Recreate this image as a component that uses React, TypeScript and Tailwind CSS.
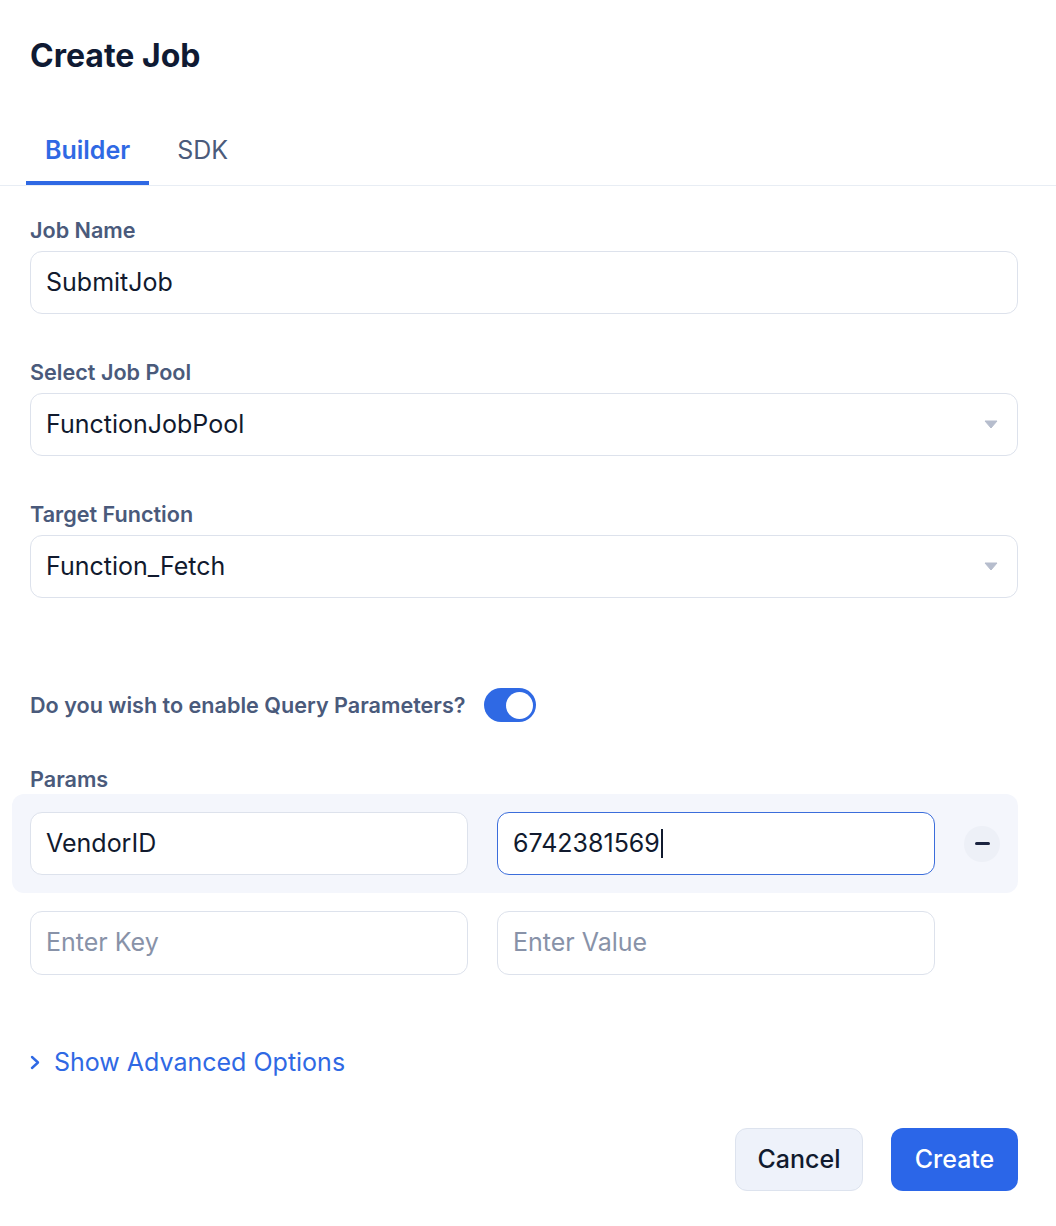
function Label({ children }: { children: React.ReactNode }) {
  return (
    <div className="text-[21.6px] leading-[28px] font-semibold text-[#4a5a7b]">
      {children}
    </div>
  )
}

function Field({
  value,
  placeholder,
  select,
  focused,
  className = '',
}: {
  value?: string
  placeholder?: string
  select?: boolean
  focused?: boolean
  className?: string
}) {
  return (
    <div
      className={`flex h-[63px] items-center rounded-[12px] border bg-white pl-[15px] pr-[19px] text-[25px] ${
        focused ? 'border-[#3b6ddb]' : 'border-[#dde2ec]'
      } ${className}`}
    >
      <span className={value ? 'text-[#111a2e]' : 'text-[#8892a8]'}>
        {value || placeholder}
      </span>
      {focused && <span className="ml-[1px] h-[29px] w-[2px] bg-[#111a2e]" />}
      {select && (
        <svg className="ml-auto" width="14" height="9" viewBox="0 0 14 9">
          <path d="M1 1h12L7 8z" fill="#b6bdcd" stroke="#b6bdcd" strokeLinejoin="round" />
        </svg>
      )}
    </div>
  )
}

export default function App() {
  return (
    <div className="min-h-[1226px] bg-white font-['Inter',sans-serif]">
      {/* Header */}
      <div className="pl-[30px] pt-[36px]">
        <h1 className="text-[32px] leading-[40px] font-bold text-[#0f1a33]">Create Job</h1>
      </div>

      {/* Tabs */}
      <div className="mt-[40px] flex border-b border-[#e8edf4] pl-[26px]">
        <button className="flex h-[69px] items-center border-b-4 border-[#2f69e4] px-[19px] pt-[4px] text-[25px] font-semibold text-[#2f69e4]">
          Builder
        </button>
        <button className="ml-[9px] flex h-[69px] items-center px-[19px] text-[25px] text-[#4b5b7b]">
          SDK
        </button>
      </div>

      <div className="pl-[30px] pr-[38px]">
        <div className="mt-[30px] flex flex-col gap-[7px]">
          <Label>Job Name</Label>
          <Field value="SubmitJob" />
        </div>

        <div className="mt-[44px] flex flex-col gap-[7px]">
          <Label>Select Job Pool</Label>
          <Field value="FunctionJobPool" select />
        </div>

        <div className="mt-[44px] flex flex-col gap-[7px]">
          <Label>Target Function</Label>
          <Field value="Function_Fetch" select />
        </div>

        {/* Toggle */}
        <div className="mt-[90px] flex items-center gap-[18px]">
          <Label>Do you wish to enable Query Parameters?</Label>
          <div className="flex h-[34px] w-[52px] items-center justify-end rounded-full bg-[#2f69e4] pr-[3px]">
            <div className="h-[27px] w-[27px] rounded-full bg-white" />
          </div>
        </div>

        {/* Params */}
        <div className="mt-[43px]">
          <Label>Params</Label>
        </div>
        <div className="-ml-[18px] mt-[1px] flex items-center gap-[29px] rounded-[12px] bg-[#f4f6fc] py-[18px] pl-[18px] pr-[18px]">
          <Field value="VendorID" className="flex-1" />
          <Field value="6742381569" focused className="flex-1" />
          <button className="flex h-[36px] w-[36px] items-center justify-center rounded-full bg-[#edf0f7]">
            <span className="h-[3px] w-[15px] rounded-full bg-[#1b2440]" />
          </button>
        </div>
        <div className="-ml-[18px] flex items-center gap-[29px] pb-[18px] pl-[18px] pr-[18px] pt-[18px]">
          <Field placeholder="Enter Key" className="h-[64px] flex-1" />
          <Field placeholder="Enter Value" className="h-[64px] flex-1" />
          <div className="w-[36px]" />
        </div>

        {/* Advanced */}
        <button className="mt-[53px] flex items-center gap-[13px] text-[25px] leading-[32px] text-[#2f69e4]">
          <svg width="11" height="15" viewBox="0 0 11 15" fill="none">
            <path
              d="M2 2l6 5.5L2 13"
              stroke="#2f69e4"
              strokeWidth="2.4"
              strokeLinecap="round"
              strokeLinejoin="round"
            />
          </svg>
          Show Advanced Options
        </button>

        {/* Footer */}
        <div className="mt-[50px] flex justify-end gap-[28px]">
          <button className="h-[63px] w-[128px] rounded-[12px] border border-[#dde3ee] bg-[#eef2fa] text-[25px] font-medium text-[#111a2e]">
            Cancel
          </button>
          <button className="h-[63px] w-[127px] rounded-[12px] bg-[#2b66e8] text-[25px] font-medium text-white">
            Create
          </button>
        </div>
      </div>
    </div>
  )
}
